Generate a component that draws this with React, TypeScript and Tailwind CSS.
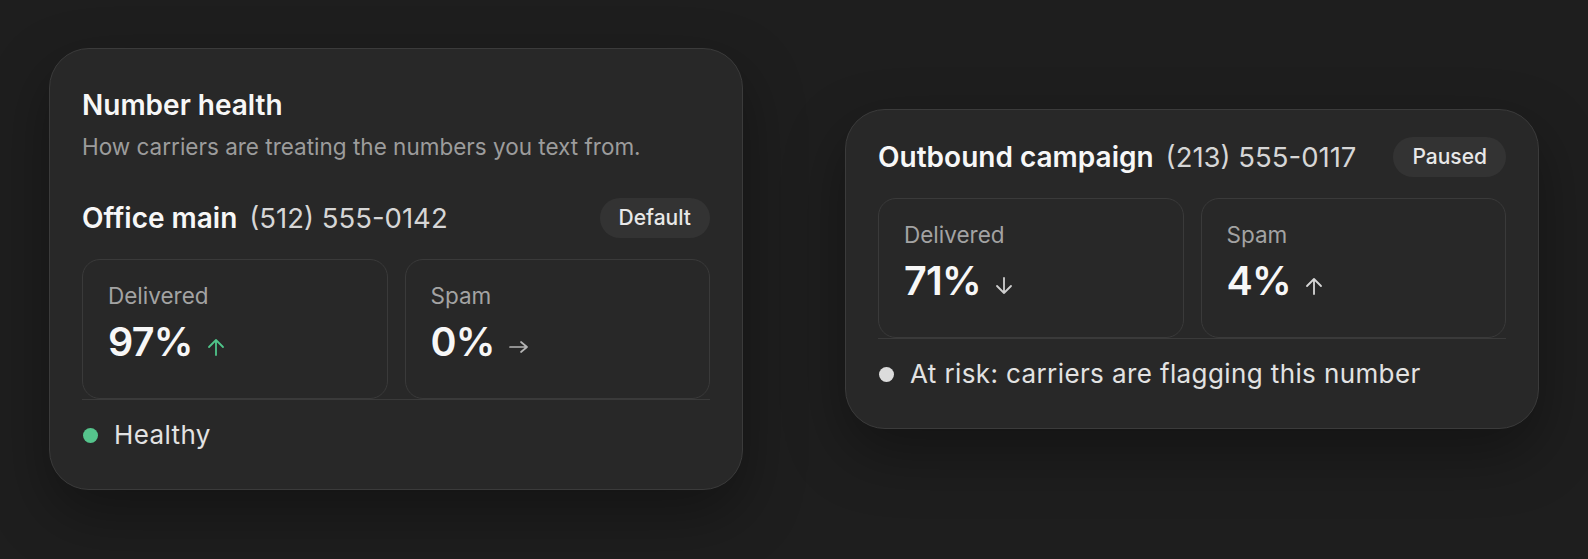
import React from 'react';

type Trend = 'up' | 'down' | 'flat';

function TrendArrow({ trend, className }: { trend: Trend; className: string }) {
  // Thin stroke arrows sitting on the value's baseline
  if (trend === 'flat') {
    return (
      <svg width="20" height="18" viewBox="0 0 20 18" fill="none" className={className}>
        <path d="M1 9h17M12 4l6 5-6 5" stroke="currentColor" strokeWidth="1.7" strokeLinecap="round" strokeLinejoin="round" />
      </svg>
    );
  }
  const d = trend === 'up' ? 'M9 17V2M2 9l7-7 7 7' : 'M9 1v15M2 9l7 7 7-7';
  return (
    <svg width="18" height="18" viewBox="0 0 18 18" fill="none" className={className}>
      <path d={d} stroke="currentColor" strokeWidth="1.8" strokeLinecap="round" strokeLinejoin="round" />
    </svg>
  );
}

function Stat({ label, value, trend, arrowColor }: { label: string; value: string; trend: Trend; arrowColor: string }) {
  return (
    <div className="h-[140px] rounded-[18px] border border-[#3a3a3a] bg-[#282828] pl-[25px] pt-[22px]">
      <div className="text-[22.5px] leading-[28px] text-[#a3a3a3]">{label}</div>
      <div className="mt-[8px] flex items-baseline gap-3.5">
        <span className="text-[39.5px] leading-[48px] font-semibold text-[#f7f7f7] tracking-[-0.02em]">{value}</span>
        <TrendArrow trend={trend} className={arrowColor} />
      </div>
    </div>
  );
}

function Badge({ children }: { children: React.ReactNode }) {
  return (
    <span className="flex h-10 items-center rounded-full bg-[#333333] px-[19px] text-[21px] font-medium text-[#e8e8e8]">
      {children}
    </span>
  );
}

function NumberRow({ name, phone, badge }: { name: string; phone: string; badge: string }) {
  return (
    <div className="flex h-10 items-center justify-between">
      <div className="flex items-baseline gap-3">
        <span className="text-[28px] leading-10 font-semibold text-[#f7f7f7]">{name}</span>
        <span className="text-[27.5px] leading-10 text-[#d6d6d6]">{phone}</span>
      </div>
      <Badge>{badge}</Badge>
    </div>
  );
}

function Footer({ dot, text }: { dot: string; text: string }) {
  return (
    <div className="flex h-8 items-center gap-4 pl-[1px]">
      <span className={`h-[15px] w-[15px] rounded-full ${dot}`} />
      <span className="text-[26px] leading-8 tracking-[0.015em] text-[#e2e2e2]">{text}</span>
    </div>
  );
}

export default function App() {
  return (
    <div
      className="flex h-[559px] w-full items-center justify-center gap-[102px] bg-[#1e1e1e] pb-[21px]"
      style={{ fontFamily: 'Inter, "Noto Sans", sans-serif' }}
    >
      {/* Main number */}
      <div className="w-[694px] rounded-[40px] border border-[#3b3b3b] bg-[#282828] px-8 pb-[38px] pt-[40px] shadow-[0_24px_60px_rgba(0,0,0,0.35)]">
        <h2 className="text-[28px] leading-[32px] font-semibold text-[#f7f7f7]">Number health</h2>
        <p className="mt-[12px] text-[22.5px] leading-[28px] text-[#9c9c9c]">
          How carriers are treating the numbers you text from.
        </p>
        <div className="mt-[37px]">
          <NumberRow name="Office main" phone="(512) 555-0142" badge="Default" />
        </div>
        <div className="mt-[21px] grid grid-cols-2 gap-[17px] border-b border-[#3a3a3a]">
          <Stat label="Delivered" value="97%" trend="up" arrowColor="text-[#4fc58a]" />
          <Stat label="Spam" value="0%" trend="flat" arrowColor="text-[#b4b4b4]" />
        </div>
        <div className="pt-[19px]">
          <Footer dot="bg-[#55c48c]" text="Healthy" />
        </div>
      </div>

      {/* Campaign number */}
      <div className="w-[694px] rounded-[40px] border border-[#3b3b3b] bg-[#282828] px-8 pb-[38px] pt-[27px] shadow-[0_24px_60px_rgba(0,0,0,0.35)]">
        <NumberRow name="Outbound campaign" phone="(213) 555-0117" badge="Paused" />
        <div className="mt-[21px] grid grid-cols-2 gap-[17px] border-b border-[#3a3a3a]">
          <Stat label="Delivered" value="71%" trend="down" arrowColor="text-[#cfcfcf]" />
          <Stat label="Spam" value="4%" trend="up" arrowColor="text-[#d6d6d6]" />
        </div>
        <div className="pt-[19px]">
          <Footer dot="bg-[#dcdcdc]" text="At risk: carriers are flagging this number" />
        </div>
      </div>
    </div>
  );
}
